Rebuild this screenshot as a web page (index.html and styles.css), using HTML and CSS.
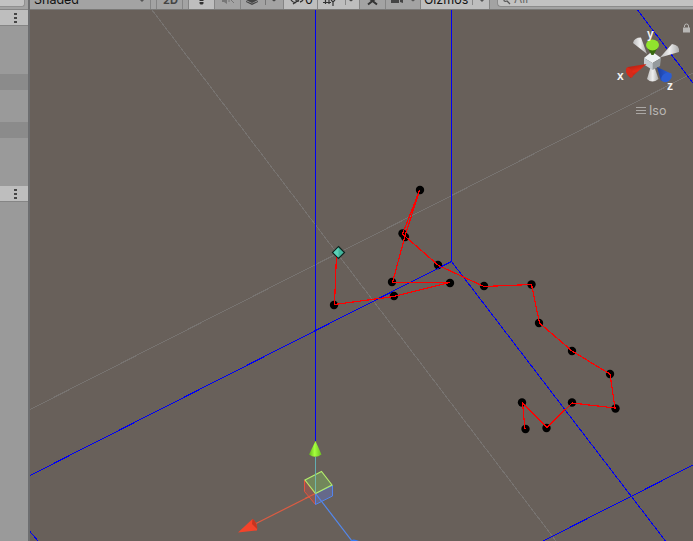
FILE: index.html
```html
<!DOCTYPE html>
<html lang="en">
<head>
<meta charset="utf-8">
<title>Scene</title>
<link rel="stylesheet" href="styles.css">
</head>
<body>
<div class="editor">
  <aside class="side">
    <div class="side-top"><span></span></div>
    <div class="side-head"><i class="kebab"></i></div>
    <div class="rows rows-first"></div>
    <div class="row-dark"></div>
    <div class="rows rows-second"></div>
    <div class="row-dark"></div>
    <div class="rows rows-third"></div>
    <div class="side-head"><i class="kebab"></i></div>
  </aside>
  <main class="view">
    <div class="toolbar">
      <div class="tool shading"><span>Shaded</span><b class="arrow"></b></div>
      <div class="tool gap"></div>
      <div class="tool two-d"><span>2D</span></div>
      <div class="tool gap"></div>
      <div class="tool on light"><svg width="25" height="9"><path d="M10 0h5l-1 1h-3zM10.500 2h4v1.500l-1 1h-2l-1-1z" fill="#333"/></svg></div>
      <div class="tool sound"><svg width="26" height="9"><path d="M7 0h5v4l-3-2H7z" fill="#777"/><path d="M14 0v2M16 0l3 3" stroke="#777"/></svg></div>
      <div class="tool fx"><svg width="42" height="9"><path d="M5 0h12l-6 3zM5 1l6 2.500L17 1v1l-6 3-6-3z" fill="#444"/><path d="M24.500 0v5" stroke="#777"/><path d="M31 0h4l-2 1.500z" fill="#444"/></svg></div>
      <div class="tool on hidden"><svg width="16" height="9"><path d="M3 0q2 3 5 2.500M12 2q2-.5 3-2M5 4l6-4M8 0q0 2 3 1" fill="none" stroke="#333" stroke-width="1.300"/></svg><span>0</span></div>
      <div class="tool on grid"><svg width="41" height="9"><path d="M5 2.500h8M7.500 0v4M11 0v4M13 0l2 2 2-2M15 1v5" fill="none" stroke="#333" stroke-width="1.200"/><path d="M27.500 0v5" stroke="#888"/><path d="M31 0h4l-2 1.500z" fill="#444"/></svg></div>
      <div class="tool tools"><svg width="25" height="9"><path d="M8 4.500L15 -1M10 -1l7 5.500" stroke="#333" stroke-width="2"/></svg></div>
      <div class="tool camera"><svg width="34" height="9"><path d="M5 0h8v3H5zM14 0h3v3l-3-1z" fill="#444"/><path d="M25 0h4l-2 1.500z" fill="#555"/></svg></div>
      <div class="tool on gizmos"><span>Gizmos</span><i></i><b class="arrow"></b></div>
      <div class="search"><svg width="12" height="6"><path d="M5 0q0 2 3 1l3 3" fill="none" stroke="#555" stroke-width="1.300"/></svg><span>All</span></div>
    </div>
    <svg class="scene" width="663" height="531" viewBox="30 10 663 531">
      <defs>
        <linearGradient id="white" x1="0" x2="1"><stop stop-color="#bbb"/><stop offset=".5" stop-color="#eee"/><stop offset="1" stop-color="#aaa"/></linearGradient>
        <linearGradient id="red" x1="0" y1="0" x2=".4" y2="1"><stop stop-color="#a31c10"/><stop offset=".6" stop-color="#e32b18"/><stop offset="1" stop-color="#b51b0e"/></linearGradient>
        <linearGradient id="blue" x1="0" x2="1"><stop stop-color="#1c3e9e"/><stop offset="1" stop-color="#2e65e8"/></linearGradient>
        <linearGradient id="green" x1="0" x2="1"><stop stop-color="#63b31b"/><stop offset=".45" stop-color="#a5ff3c"/><stop offset="1" stop-color="#69bd22"/></linearGradient>
      </defs>
      <g class="far">
        <path d="M152 10L556 541"/>
        <path d="M30 409.500L693 73"/>
      </g>
      <g class="bounds">
        <path d="M315.500 10V441M451.500 10V261.500"/>
        <path d="M30 475.500L451.500 261.500L665.500 541"/>
        <path d="M637.500 10L693 83M543 541L693 465M30 531.500L38 541"/>
      </g>
      <g class="nodes">
        <circle cx="334" cy="305" r="4.200"/><circle cx="394" cy="296" r="4.200"/><circle cx="450" cy="283" r="4.200"/>
        <circle cx="392" cy="282" r="4.200"/><circle cx="420" cy="190" r="4.200"/><circle cx="402.500" cy="233.500" r="4.200"/><circle cx="405" cy="237" r="4.200"/>
        <circle cx="438" cy="265" r="4.200"/><circle cx="484" cy="286" r="4.200"/><circle cx="531.500" cy="284.500" r="4.200"/>
        <circle cx="539" cy="323" r="4.200"/><circle cx="572" cy="351" r="4.200"/><circle cx="610" cy="374" r="4.200"/>
        <circle cx="615.500" cy="408.500" r="4.200"/><circle cx="572" cy="402.500" r="4.200"/><circle cx="546.500" cy="428" r="4.200"/>
        <circle cx="522" cy="402.500" r="4.200"/><circle cx="525.500" cy="429" r="4.200"/>
      </g>
      <path class="chain" d="M336.500 254L334.500 304.500L394 296.500L449.500 282.500H392.500L405 236L419.500 190.500L402.500 234L438.500 265.500L484 286.500L531.500 284.500L539.500 323L572 351L610 374L615 408L572 403L547 427.500L522.500 403L525 429"/>
      <path class="bounds" d="M430 272.500L451.500 261.500"/>
      <path d="M338.500 246.500L344.500 252.500L338.500 258.500L332.500 252.500Z" fill="#42b59c" stroke="#10231f" stroke-width="1.200"/>
      <path d="M338.500 247.500v10l-5-5z" fill="#5bd0b8"/>

      <g class="handle" fill="none">
        <path d="M315.500 457V493" stroke="#63adb1"/>
        <path d="M315.500 493.500L255 524" stroke="#dc5c42" stroke-width="1.200"/>
        <path d="M304.500 480L315.500 493.500V504.500L304.500 491.500Z" fill="#8b5a52" stroke="#e7523d"/>
        <path d="M315.500 493.500L332.500 485.500V496L315.500 504.500Z" fill="#65698a" stroke="#5384ec"/>
        <path d="M315.500 493.500L352 541" stroke="#5288ef" stroke-width="1.200"/>
        <path d="M315.500 493.500L305 498.500" stroke="#dc5c42" stroke-width="1.200"/>
        <path d="M305 480L321.500 471.500L332 485L315.500 493.500Z" fill="#72875b" stroke="#b4ef6c" stroke-width="1.100"/>
        <path d="M315.500 474V493.500" stroke="#71b9ad"/>
      </g>
      <path d="M315.500 441L309 454.500Q315 459 321.500 454.500Z" fill="url(#green)"/>
      <path d="M238 532.500L252.500 519Q258 523 257 530.500Z" fill="#f4432a"/>
      <path d="M252.500 519Q258 523 257 529L252 524Z" fill="#c63520"/>
      <path d="M350 541Q353 538 359 541Z" fill="#3479f5"/>

      <g class="compass">
        <path d="M633 43Q634 37.500 641 37.500L647 54Z" fill="url(#white)"/>
        <path d="M660 57.500L672 44Q680 45 679 52Z" fill="url(#white)"/>
        <path d="M652.500 61L647 79Q652 84 658.500 79Z" fill="url(#white)"/>
        <path d="M652 51.500L661 58L652.500 63L644 58Z" fill="#eef2f4"/>
        <path d="M644 58L652.500 63V70L644 64.500Z" fill="#c4cbd0"/>
        <path d="M652.500 63L661 58L660 66L652.500 70Z" fill="#949a9d"/>
        <path d="M647 47H658L653.500 55H651.500Z" fill="#376810"/>
        <ellipse cx="652.500" cy="45" rx="6.500" ry="5.400" fill="#91e42d"/>
        <path d="M646.500 64L628 67Q623 71 630.500 78Z" fill="url(#red)"/>
        <ellipse cx="629.500" cy="72.500" rx="2.800" ry="5.500" transform="rotate(-26 629.500 72.500)" fill="#d52a19"/>
        <path d="M657 67L661 81L672 74Z" fill="url(#blue)"/>
        <ellipse cx="666.500" cy="77.500" rx="5.800" ry="4.200" transform="rotate(-35 666.500 77.500)" fill="#2b5dd4"/>
        <text x="617" y="80">x</text><text x="647" y="37.500">y</text><text x="667" y="90">z</text>
      </g>
      <path d="M683 27.500h7v5h-7z" fill="#b8b7b5"/><path d="M684.500 27v-1a2 2 0 0 1 4 0v2" fill="none" stroke="#b8b7b5"/>
      <path d="M636 107.500h10M636 110.500h10M636 113.500h10" stroke="#aaa7a4"/>
      <text class="iso" x="649" y="115">Iso</text>
    </svg>
  </main>
</div>
</body>
</html>
```
FILE: styles.css
```css
* { box-sizing: border-box; }
body { margin: 0; overflow: hidden; font-family: Inter, "Liberation Sans", sans-serif; }
.editor { display: flex; width: 693px; height: 541px; background: #68605a; }
.side { width: 30px; background: #9a9a9a; border-right: 2px solid #6d6e70; }
.side-top { height: 10px; background: #a3a3a3; border-bottom: 1px solid #858585; }
.side-top span { display: block; width: 25px; height: 7px; background: #c2c2c2; border: solid #909090; border-width: 0 1px 1px 0; border-radius: 0 0 3px; }
.side-head { height: 16px; background: #bebebe; border-bottom: 1px solid #858585; padding: 3px 0 0 14px; }
.kebab { display: block; width: 3px; height: 10px; background: repeating-linear-gradient(#454545 0 2px, transparent 2px 4px); }
.rows-first { height: 48px; }
.row-dark { height: 16px; background: #8b8b8b; }
.rows-second { height: 32px; }
.rows-third { height: 48px; }
.view { width: 663px; }
.toolbar { display: flex; height: 10px; overflow: hidden; background: #a3a3a3; border-bottom: 1px solid #7a7977; font-size: 12px; line-height: 16px; color: #111; }
.tool { display: flex; flex: none; height: 9px; border-right: 1px solid #858585; }
.tool svg, .search svg { display: block; flex: none; }
.tool span { margin-top: -8px; height: 16px; }
.on { background: #bebebe; }
.shading { width: 121px; padding-left: 4px; justify-content: space-between; padding-right: 6px; }
.arrow { border: solid transparent; border-width: 0 2px; border-top: 2px solid #555; height: 0; }
.gap { width: 6px; }
.two-d { width: 26px; padding-left: 6px; font-size: 11px; font-weight: bold; color: #444; }
.light { width: 26px; }
.sound { width: 26px; }
.fx { width: 43px; }
.hidden { width: 34px; padding-left: 4px; }
.hidden svg { margin-right: 1px; }
.grid { width: 42px; }
.tools { width: 26px; }
.camera { width: 35px; }
.gizmos { width: 69px; padding-left: 3px; }
.gizmos i { width: 1px; height: 5px; margin: 0 7px 0 4px; background: #888; }
.search { display: flex; flex: 1; height: 7px; margin-left: 7px; padding-left: 1px; background: #c2c2c2; border: solid #8b8b8b; border-width: 0 0 1px 1px; border-radius: 0 0 0 4px; color: #666; overflow: hidden; }
.search span { margin: -9px 0 0 3px; }
.tool.shading span, .tool.gizmos span, .tool.hidden span { font-size: 12.5px; }
.scene { display: block; }
.far { stroke: #777370; fill: none; shape-rendering: crispEdges; }
.bounds { stroke: #0000f4; fill: none; shape-rendering: crispEdges; }
.nodes { fill: #000; }
.chain { fill: none; stroke: #f00; stroke-width: 1.2; shape-rendering: crispEdges; }
.compass text { font: bold 12px "Liberation Sans", sans-serif; fill: #f2f2f2; }
.iso { font: 12.5px Inter, sans-serif; fill: #b9b7b4; }
```
